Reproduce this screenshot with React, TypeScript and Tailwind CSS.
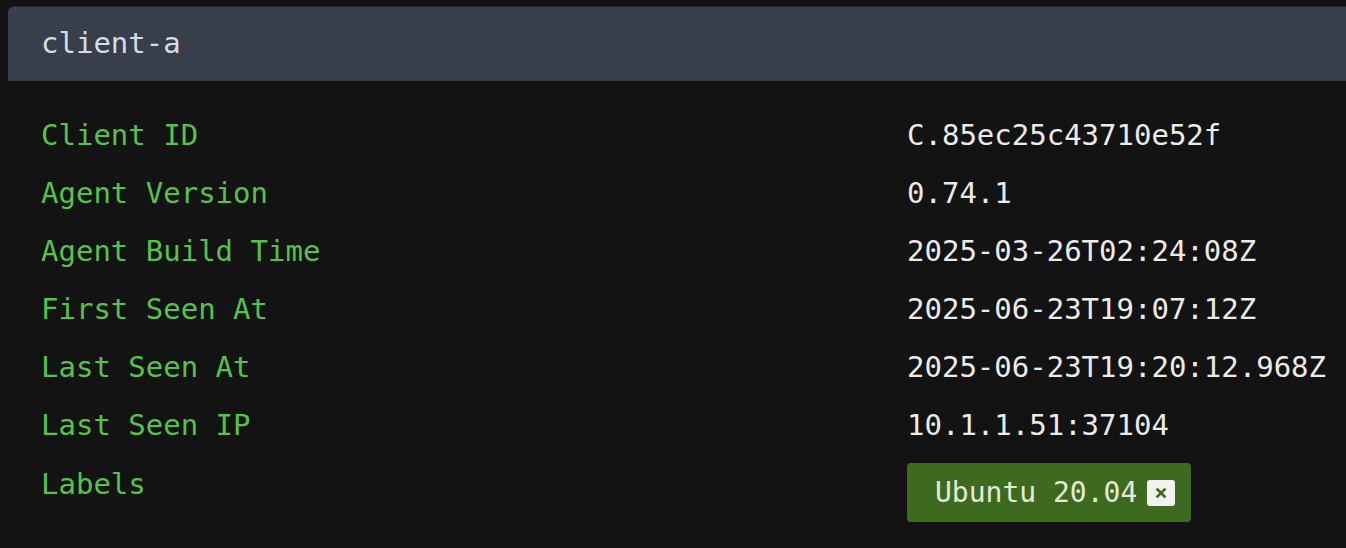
import React from "react";

const rows: [string, string][] = [
  ["Client ID", "C.85ec25c43710e52f"],
  ["Agent Version", "0.74.1"],
  ["Agent Build Time", "2025-03-26T02:24:08Z"],
  ["First Seen At", "2025-06-23T19:07:12Z"],
  ["Last Seen At", "2025-06-23T19:20:12.968Z"],
  ["Last Seen IP", "10.1.1.51:37104"],
];

export default function App() {
  return (
    <div
      className="w-[1346px] h-[548px] overflow-hidden bg-[#131313] pl-[8px] pt-[6px] text-[29px]"
      style={{ fontFamily: '"DejaVu Sans Mono", "Liberation Mono", monospace' }}
    >
      <div className="h-[75px] bg-[#383e4a] rounded-tl-[6px] pl-[33px] flex items-center text-[#d6dce5] border-t border-[#2a2e36]">
        client-a
      </div>
      <div className="pt-[26px] pl-[33px]">
        {rows.map(([k, v]) => (
          <div key={k} className="flex h-[58px] items-center">
            <div className="w-[866px] text-[#55c24a]">{k}</div>
            <div className="text-[#ecebea]">{v}</div>
          </div>
        ))}
        <div className="flex items-start">
          <div className="w-[866px] h-[58px] leading-[58px] text-[#55c24a]">Labels</div>
          <div className="mt-[8px] h-[59px] w-[284px] bg-[#3d6a1f] rounded-[4px] flex items-center pl-[28px] text-[28px] text-[#e4ead8]">
            <span>Ubuntu 20.04</span>
            <span className="ml-[10px] w-[28px] h-[26px] bg-[#f1f1ee] rounded-[3px] flex items-center justify-center">
              <svg width="12" height="12" viewBox="0 0 12 12">
                <path d="M2.5 2.5 L9.5 9.5 M9.5 2.5 L2.5 9.5" stroke="#3d6a1f" strokeWidth="2.6" strokeLinecap="square" />
              </svg>
            </span>
          </div>
        </div>
      </div>
    </div>
  );
}
